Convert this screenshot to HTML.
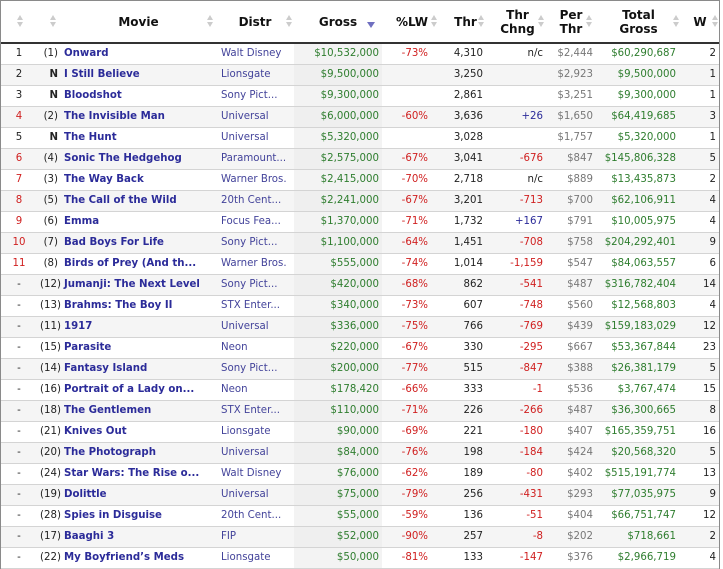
<!DOCTYPE html>
<html><head><meta charset="utf-8"><style>
*{margin:0;padding:0;box-sizing:border-box}
body{width:723px;height:568px;overflow:hidden;background:#fff;font-family:"DejaVu Sans",Verdana,sans-serif;font-size:10px}
.wrap{position:absolute;left:0;top:0;width:720px;border:1px solid #8a8a8a;border-bottom:none}
table{border-collapse:collapse;table-layout:fixed;width:718px}
th{height:42px;font-weight:bold;font-size:12px;color:#111;position:relative;border-bottom:2px solid #333;line-height:14px;text-align:center}
th .a{position:absolute;top:14px;width:7px;height:14px}
th .a:before{content:"";position:absolute;left:0;top:0;border:3.5px solid transparent;border-bottom:5px solid #ccc;border-top:none}
th .a:after{content:"";position:absolute;left:0;top:7px;border:3.5px solid transparent;border-top:5px solid #ccc;border-bottom:none}
th .d{position:absolute;top:21px;border:4px solid transparent;border-top:6px solid #6f6fc0;border-bottom:none}
td{height:21px;border-bottom:1px solid #d4d4d4;white-space:nowrap;overflow:hidden;padding:0 3px;color:#222;font-size:10.2px}
tr:nth-child(odd) td{background:#f5f5f5}
tr td:nth-child(5){background:#efefef!important}
tr:nth-child(even) td:nth-child(5){background:#f3f3f3!important}
td:nth-child(1){text-align:center}
td:nth-child(2){text-align:right;color:#222}
td:nth-child(3){color:#2b2b99;font-weight:bold;padding-left:3px}
td:nth-child(4){color:#43439a;padding-left:5px}
td:nth-child(5){text-align:right;color:#2e7d2e}
td:nth-child(6){text-align:right;color:#d02020;padding-right:14px}
td:nth-child(7){text-align:right;padding-right:6px}
td:nth-child(8){text-align:right;color:#d02020}
td:nth-child(9){text-align:right;color:#777}
td:nth-child(10){text-align:right;color:#2e7d2e;padding-right:5px}
td:nth-child(11){text-align:right}
.r{color:#d02020!important}
.b{font-weight:bold}
</style></head><body><div class="wrap"><table>
<colgroup><col style="width:36px"><col style="width:24px"><col style="width:155px"><col style="width:78px"><col style="width:88px"><col style="width:60px"><col style="width:47px"><col style="width:57px"><col style="width:50px"><col style="width:85px"><col style="width:38px"></colgroup>
<tr><th><span class="a" style="left:16px"></span></th><th><span class="a" style="left:13px"></span></th><th>Movie<span class="a" style="left:146px"></span></th><th>Distr<span class="a" style="left:70px"></span></th><th>Gross<span class="d" style="left:73px"></span></th><th>%LW<span class="a" style="left:49px"></span></th><th>Thr<span class="a" style="left:36px"></span></th><th>Thr<br>Chng<span class="a" style="left:49px"></span></th><th>Per<br>Thr<span class="a" style="left:40px"></span></th><th>Total<br>Gross<span class="a" style="left:77px"></span></th><th>W<span class="a" style="left:31px"></span></th></tr>
<tr><td>1</td><td>(1)</td><td>Onward</td><td>Walt Disney</td><td>$10,532,000</td><td>-73%</td><td>4,310</td><td style="color:#222">n/c</td><td>$2,444</td><td>$60,290,687</td><td>2</td></tr>
<tr><td>2</td><td class="b">N</td><td>I Still Believe</td><td>Lionsgate</td><td>$9,500,000</td><td></td><td>3,250</td><td></td><td>$2,923</td><td>$9,500,000</td><td>1</td></tr>
<tr><td>3</td><td class="b">N</td><td>Bloodshot</td><td>Sony Pict...</td><td>$9,300,000</td><td></td><td>2,861</td><td></td><td>$3,251</td><td>$9,300,000</td><td>1</td></tr>
<tr><td class="r">4</td><td>(2)</td><td>The Invisible Man</td><td>Universal</td><td>$6,000,000</td><td>-60%</td><td>3,636</td><td style="color:#2b2b99">+26</td><td>$1,650</td><td>$64,419,685</td><td>3</td></tr>
<tr><td>5</td><td class="b">N</td><td>The Hunt</td><td>Universal</td><td>$5,320,000</td><td></td><td>3,028</td><td></td><td>$1,757</td><td>$5,320,000</td><td>1</td></tr>
<tr><td class="r">6</td><td>(4)</td><td>Sonic The Hedgehog</td><td>Paramount...</td><td>$2,575,000</td><td>-67%</td><td>3,041</td><td>-676</td><td>$847</td><td>$145,806,328</td><td>5</td></tr>
<tr><td class="r">7</td><td>(3)</td><td>The Way Back</td><td>Warner Bros.</td><td>$2,415,000</td><td>-70%</td><td>2,718</td><td style="color:#222">n/c</td><td>$889</td><td>$13,435,873</td><td>2</td></tr>
<tr><td class="r">8</td><td>(5)</td><td>The Call of the Wild</td><td>20th Cent...</td><td>$2,241,000</td><td>-67%</td><td>3,201</td><td>-713</td><td>$700</td><td>$62,106,911</td><td>4</td></tr>
<tr><td class="r">9</td><td>(6)</td><td>Emma</td><td>Focus Fea...</td><td>$1,370,000</td><td>-71%</td><td>1,732</td><td style="color:#2b2b99">+167</td><td>$791</td><td>$10,005,975</td><td>4</td></tr>
<tr><td class="r">10</td><td>(7)</td><td>Bad Boys For Life</td><td>Sony Pict...</td><td>$1,100,000</td><td>-64%</td><td>1,451</td><td>-708</td><td>$758</td><td>$204,292,401</td><td>9</td></tr>
<tr><td class="r">11</td><td>(8)</td><td>Birds of Prey (And th...</td><td>Warner Bros.</td><td>$555,000</td><td>-74%</td><td>1,014</td><td>-1,159</td><td>$547</td><td>$84,063,557</td><td>6</td></tr>
<tr><td>-</td><td>(12)</td><td>Jumanji: The Next Level</td><td>Sony Pict...</td><td>$420,000</td><td>-68%</td><td>862</td><td>-541</td><td>$487</td><td>$316,782,404</td><td>14</td></tr>
<tr><td>-</td><td>(13)</td><td>Brahms: The Boy II</td><td>STX Enter...</td><td>$340,000</td><td>-73%</td><td>607</td><td>-748</td><td>$560</td><td>$12,568,803</td><td>4</td></tr>
<tr><td>-</td><td>(11)</td><td>1917</td><td>Universal</td><td>$336,000</td><td>-75%</td><td>766</td><td>-769</td><td>$439</td><td>$159,183,029</td><td>12</td></tr>
<tr><td>-</td><td>(15)</td><td>Parasite</td><td>Neon</td><td>$220,000</td><td>-67%</td><td>330</td><td>-295</td><td>$667</td><td>$53,367,844</td><td>23</td></tr>
<tr><td>-</td><td>(14)</td><td>Fantasy Island</td><td>Sony Pict...</td><td>$200,000</td><td>-77%</td><td>515</td><td>-847</td><td>$388</td><td>$26,381,179</td><td>5</td></tr>
<tr><td>-</td><td>(16)</td><td>Portrait of a Lady on...</td><td>Neon</td><td>$178,420</td><td>-66%</td><td>333</td><td>-1</td><td>$536</td><td>$3,767,474</td><td>15</td></tr>
<tr><td>-</td><td>(18)</td><td>The Gentlemen</td><td>STX Enter...</td><td>$110,000</td><td>-71%</td><td>226</td><td>-266</td><td>$487</td><td>$36,300,665</td><td>8</td></tr>
<tr><td>-</td><td>(21)</td><td>Knives Out</td><td>Lionsgate</td><td>$90,000</td><td>-69%</td><td>221</td><td>-180</td><td>$407</td><td>$165,359,751</td><td>16</td></tr>
<tr><td>-</td><td>(20)</td><td>The Photograph</td><td>Universal</td><td>$84,000</td><td>-76%</td><td>198</td><td>-184</td><td>$424</td><td>$20,568,320</td><td>5</td></tr>
<tr><td>-</td><td>(24)</td><td>Star Wars: The Rise o...</td><td>Walt Disney</td><td>$76,000</td><td>-62%</td><td>189</td><td>-80</td><td>$402</td><td>$515,191,774</td><td>13</td></tr>
<tr><td>-</td><td>(19)</td><td>Dolittle</td><td>Universal</td><td>$75,000</td><td>-79%</td><td>256</td><td>-431</td><td>$293</td><td>$77,035,975</td><td>9</td></tr>
<tr><td>-</td><td>(28)</td><td>Spies in Disguise</td><td>20th Cent...</td><td>$55,000</td><td>-59%</td><td>136</td><td>-51</td><td>$404</td><td>$66,751,747</td><td>12</td></tr>
<tr><td>-</td><td>(17)</td><td>Baaghi 3</td><td>FIP</td><td>$52,000</td><td>-90%</td><td>257</td><td>-8</td><td>$202</td><td>$718,661</td><td>2</td></tr>
<tr><td>-</td><td>(22)</td><td>My Boyfriend’s Meds</td><td>Lionsgate</td><td>$50,000</td><td>-81%</td><td>133</td><td>-147</td><td>$376</td><td>$2,966,719</td><td>4</td></tr>
</table></div></body></html>
